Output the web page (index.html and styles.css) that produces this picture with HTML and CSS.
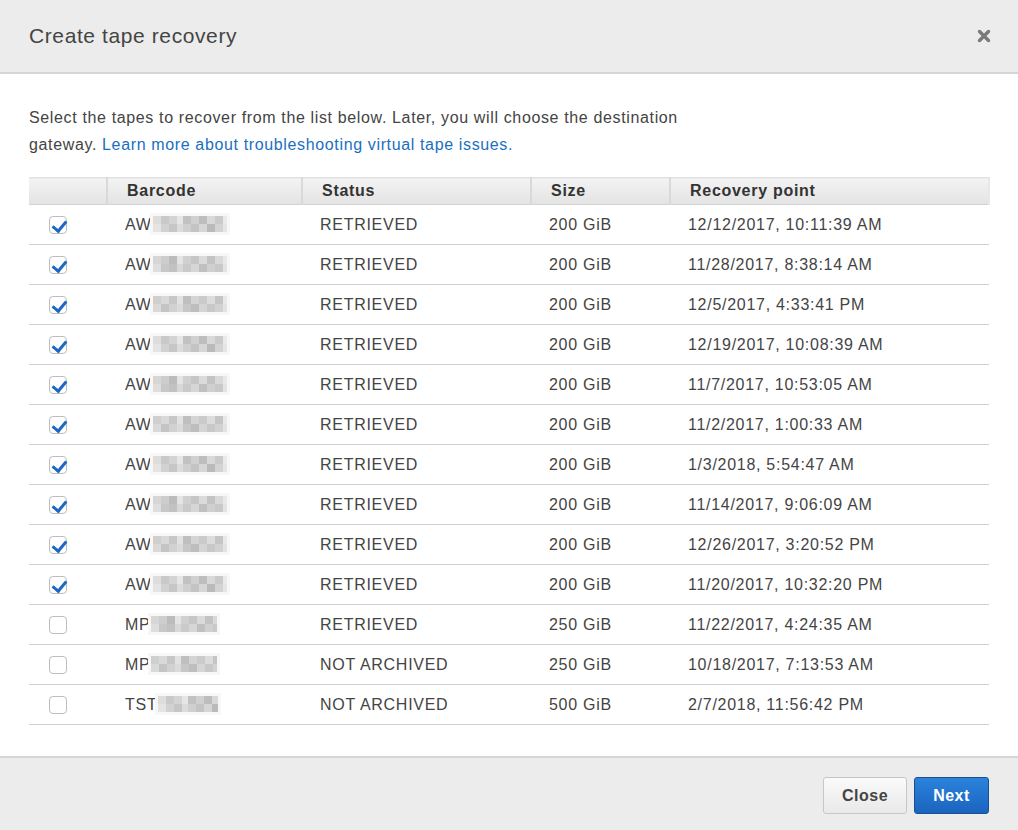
FILE: index.html
```html
<!DOCTYPE html>
<html>
<head>
<meta charset="utf-8">
<link rel="stylesheet" href="styles.css">
</head>
<body>
<div class="modal">
  <div class="modal-header">
    <h1 class="title">Create tape recovery</h1>
    <button class="close-x" aria-label="Close">
      <svg width="14" height="14" viewBox="0 0 14 14"><path d="M2.5 2.5 L11.5 11.5 M11.5 2.5 L2.5 11.5" stroke="#7a7a7a" stroke-width="3.4" stroke-linecap="round"/></svg>
    </button>
  </div>
  <div class="modal-body">
    <p class="intro">Select the tapes to recover from the list below. Later, you will choose the destination<br>gateway. <a href="#" class="link">Learn more about troubleshooting virtual tape issues.</a></p>
    <table class="tapes">
      <colgroup>
        <col class="c-check"><col class="c-barcode"><col class="c-status"><col class="c-size"><col class="c-rp">
      </colgroup>
      <thead>
        <tr><th></th><th>Barcode</th><th>Status</th><th>Size</th><th>Recovery point</th></tr>
      </thead>
      <tbody>
        <tr><td><span class="cb on"></span></td><td>AW<span class="blur b1"></span></td><td>RETRIEVED</td><td>200 GiB</td><td>12/12/2017, 10:11:39 AM</td></tr>
        <tr><td><span class="cb on"></span></td><td>AW<span class="blur b2"></span></td><td>RETRIEVED</td><td>200 GiB</td><td>11/28/2017, 8:38:14 AM</td></tr>
        <tr><td><span class="cb on"></span></td><td>AW<span class="blur b3"></span></td><td>RETRIEVED</td><td>200 GiB</td><td>12/5/2017, 4:33:41 PM</td></tr>
        <tr><td><span class="cb on"></span></td><td>AW<span class="blur b1"></span></td><td>RETRIEVED</td><td>200 GiB</td><td>12/19/2017, 10:08:39 AM</td></tr>
        <tr><td><span class="cb on"></span></td><td>AW<span class="blur b2"></span></td><td>RETRIEVED</td><td>200 GiB</td><td>11/7/2017, 10:53:05 AM</td></tr>
        <tr><td><span class="cb on"></span></td><td>AW<span class="blur b3"></span></td><td>RETRIEVED</td><td>200 GiB</td><td>11/2/2017, 1:00:33 AM</td></tr>
        <tr><td><span class="cb on"></span></td><td>AW<span class="blur b1"></span></td><td>RETRIEVED</td><td>200 GiB</td><td>1/3/2018, 5:54:47 AM</td></tr>
        <tr><td><span class="cb on"></span></td><td>AW<span class="blur b2"></span></td><td>RETRIEVED</td><td>200 GiB</td><td>11/14/2017, 9:06:09 AM</td></tr>
        <tr><td><span class="cb on"></span></td><td>AW<span class="blur b3"></span></td><td>RETRIEVED</td><td>200 GiB</td><td>12/26/2017, 3:20:52 PM</td></tr>
        <tr><td><span class="cb on"></span></td><td>AW<span class="blur b1"></span></td><td>RETRIEVED</td><td>200 GiB</td><td>11/20/2017, 10:32:20 PM</td></tr>
        <tr><td><span class="cb"></span></td><td>MP<span class="blur b2 short"></span></td><td>RETRIEVED</td><td>250 GiB</td><td>11/22/2017, 4:24:35 AM</td></tr>
        <tr><td><span class="cb"></span></td><td>MP<span class="blur b3 short"></span></td><td>NOT ARCHIVED</td><td>250 GiB</td><td>10/18/2017, 7:13:53 AM</td></tr>
        <tr><td><span class="cb"></span></td><td>TST<span class="blur b1 short2"></span></td><td>NOT ARCHIVED</td><td>500 GiB</td><td>2/7/2018, 11:56:42 PM</td></tr>
      </tbody>
    </table>
  </div>
  <div class="modal-footer">
    <button class="btn btn-close">Close</button>
    <button class="btn btn-next">Next</button>
  </div>
</div>
</body>
</html>
```
FILE: styles.css
```css
* { box-sizing: border-box; }
html, body { margin: 0; padding: 0; background: #fff; }
body {
  font-family: "Liberation Sans", Arial, sans-serif;
  color: #444;
  letter-spacing: 0.72px;
  width: 1018px;
  height: 830px;
  overflow: hidden;
}
.modal { display: flex; flex-direction: column; height: 830px; }
.modal-header {
  height: 74px;
  background: #ececec;
  border-bottom: 2px solid #d6d6d6;
  display: flex;
  align-items: center;
  justify-content: space-between;
  padding: 0 27px 0 29px;
}
.title {
  margin: 0;
  font-size: 21px;
  font-weight: normal;
  color: #444;
  letter-spacing: 0.6px;
}
.close-x {
  border: 0;
  background: transparent;
  padding: 0;
  width: 14px;
  height: 14px;
  display: flex;
  cursor: pointer;
}
.modal-body { padding: 0 29px; flex: 1; }
.intro {
  margin: 30px 0 19px;
  font-size: 16px;
  line-height: 27px;
  color: #444;
  letter-spacing: 0.64px;
}
.link { color: #1a6fc0; text-decoration: none; }
.tapes {
  width: 960px;
  border-collapse: collapse;
  table-layout: fixed;
  font-size: 16px;
}
.c-check { width: 78px; }
.c-barcode { width: 195px; }
.c-status { width: 229px; }
.c-size { width: 139px; }
.c-rp { width: 319px; }
.tapes th {
  height: 27px;
  text-align: left;
  font-weight: bold;
  color: #333;
  padding: 0 0 0 19px;
  background: linear-gradient(#f3f3f3, #e3e3e3);
  border-top: 1px solid #e2e2e2;
  border-bottom: 1px solid #d2d2d2;
  border-left: 2px solid #d9d9d9;
}
.tapes th:first-child { border-left: 0; }
.tapes th:last-child { border-right: 2px solid #e8e8e8; }
.tapes td {
  height: 40px;
  padding: 0 0 0 18px;
  border-bottom: 1px solid #cfcfcf;
  color: #444;
  white-space: nowrap;
  vertical-align: middle;
}
.tapes td:first-child { padding-left: 20px; }
.cb {
  display: block;
  width: 18px;
  height: 18px;
  border: 1px solid #bdbdbd;
  border-radius: 4px;
  background: #fff;
  position: relative;
}
.cb.on::after {
  content: "";
  position: absolute;
  left: 5px;
  top: 1px;
  width: 6px;
  height: 11px;
  border: solid #1c68c4;
  border-width: 0 3px 3px 0;
  transform: rotate(40deg);
}
.blur {
  display: inline-block;
  vertical-align: -2px;
  width: 74px;
  height: 16px;
  margin-left: 1px;
  box-shadow: 0 0 0 3px #f7f7f7;
  background-color: #ececec;
}
.blur.b1 {
  background-image:
    linear-gradient(90deg, #ddd 0 8px, #c9c9c9 8px 16px, #d4d4d4 16px 24px, #e6e6e6 24px 30px, #c2c2c2 30px 38px, #d0d0d0 38px 46px, #bdbdbd 46px 54px, #d8d8d8 54px 62px, #cacaca 62px 70px, #eaeaea 70px 76px),
    linear-gradient(90deg, #e4e4e4 0 8px, #d2d2d2 8px 16px, #c6c6c6 16px 24px, #dcdcdc 24px 30px, #cfcfcf 30px 38px, #c4c4c4 38px 46px, #d6d6d6 46px 54px, #bababa 54px 62px, #d3d3d3 62px 70px, #e6e6e6 70px 76px);
  background-size: 76px 8px, 76px 8px;
  background-position: 0 0, 0 8px;
  background-repeat: no-repeat;
}
.blur.b2 {
  background-image:
    linear-gradient(90deg, #d6d6d6 0 8px, #cdcdcd 8px 16px, #bcbcbc 16px 24px, #e4e4e4 24px 30px, #d0d0d0 30px 38px, #c6c6c6 38px 46px, #dadada 46px 54px, #c3c3c3 54px 62px, #d9d9d9 62px 70px, #e9e9e9 70px 76px),
    linear-gradient(90deg, #dedede 0 8px, #c8c8c8 8px 16px, #c2c2c2 16px 24px, #d8d8d8 24px 30px, #cacaca 30px 38px, #d6d6d6 38px 46px, #c0c0c0 46px 54px, #d0d0d0 54px 62px, #c9c9c9 62px 70px, #e4e4e4 70px 76px);
  background-size: 76px 8px, 76px 8px;
  background-position: 0 0, 0 8px;
  background-repeat: no-repeat;
}
.blur.b3 {
  background-image:
    linear-gradient(90deg, #cfcfcf 0 8px, #d9d9d9 8px 16px, #c7c7c7 16px 24px, #e2e2e2 24px 30px, #bfbfbf 30px 38px, #d4d4d4 38px 46px, #cbcbcb 46px 54px, #dcdcdc 54px 62px, #c5c5c5 62px 70px, #e8e8e8 70px 76px),
    linear-gradient(90deg, #d9d9d9 0 8px, #c4c4c4 8px 16px, #d1d1d1 16px 24px, #dadada 24px 30px, #c7c7c7 30px 38px, #bebebe 38px 46px, #d5d5d5 46px 54px, #c8c8c8 54px 62px, #d2d2d2 62px 70px, #e3e3e3 70px 76px);
  background-size: 76px 8px, 76px 8px;
  background-position: 0 0, 0 8px;
  background-repeat: no-repeat;
}
.blur.short { width: 66px; }
.blur.short2 { width: 60px; }
.modal-footer {
  height: 74px;
  background: #ececec;
  border-top: 2px solid #d6d6d6;
  display: flex;
  justify-content: flex-end;
  align-items: flex-start;
  gap: 7px;
  padding: 19px 29px 0 0;
}
.btn {
  height: 37px;
  font-family: "Liberation Sans", Arial, sans-serif;
  font-size: 16px;
  font-weight: bold;
  letter-spacing: 0.5px;
  border-radius: 3px;
  padding: 0;
  cursor: pointer;
}
.btn-close {
  width: 84px;
  color: #444;
  background: linear-gradient(#fafafa, #e9e9e9);
  border: 1px solid #c6c6c6;
}
.btn-next {
  width: 75px;
  color: #fff;
  background: linear-gradient(#2b83dc, #1a64bf);
  border: 1px solid #1a4f8f;
}
```
